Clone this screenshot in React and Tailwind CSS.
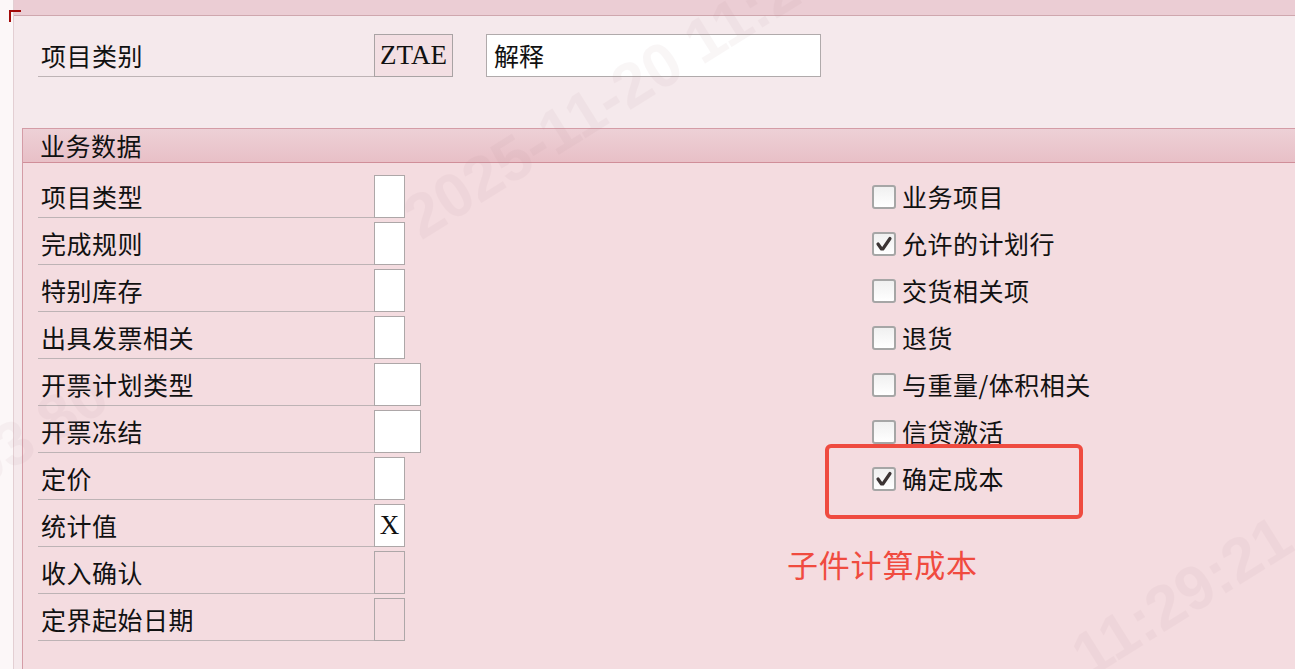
import React from "react";

const cjk = { fontFamily: '"Noto Sans CJK SC", "Noto Sans", sans-serif' };
const serif = { fontFamily: '"Liberation Serif", "Noto Sans CJK SC", serif' };
const wm = { fontFamily: '"Liberation Sans", sans-serif' };

const leftRows = [
  { label: "项目类型", w: "w-[31px]" },
  { label: "完成规则", w: "w-[31px]" },
  { label: "特别库存", w: "w-[31px]" },
  { label: "出具发票相关", w: "w-[31px]" },
  { label: "开票计划类型", w: "w-[47px]" },
  { label: "开票冻结", w: "w-[47px]" },
  { label: "定价", w: "w-[31px]" },
  { label: "统计值", w: "w-[31px]", value: "X" },
  { label: "收入确认", w: "w-[31px]", disabled: true },
  { label: "定界起始日期", w: "w-[31px]", disabled: true },
];

const rightRows = [
  { label: "业务项目", checked: false },
  { label: "允许的计划行", checked: true },
  { label: "交货相关项", checked: false },
  { label: "退货", checked: false },
  { label: "与重量/体积相关", checked: false },
  { label: "信贷激活", checked: false },
  { label: "确定成本", checked: true },
];

function CheckBox({ checked }) {
  return (
    <div className="w-[24px] h-[24px] shrink-0 rounded-[3px] border-2 border-[#a6a6a6] bg-gradient-to-b from-[#f0f0f0] to-white flex items-center justify-center">
      {checked && (
        <svg width="18" height="18" viewBox="0 0 18 18">
          <path d="M3 9 L6.5 14 L7.8 14 L15 3.5" fill="none" stroke="#3c3434" strokeWidth="3.2" strokeLinecap="round" strokeLinejoin="round" />
        </svg>
      )}
    </div>
  );
}

export default function App() {
  return (
    <div className="relative w-[1295px] h-[669px] overflow-hidden flex bg-[#f5e9ec] text-[#111]" style={cjk}>
      {/* left strip */}
      <div className="w-[14px] shrink-0 bg-[#fcf7f8] border-r border-[#e3cfd3] relative">
        <div className="absolute left-[9px] top-[10px] w-[12px] h-[2px] bg-[#a30a0a]" />
        <div className="absolute left-[9px] top-[10px] w-[2px] h-[12px] bg-[#a30a0a]" />
      </div>

      {/* main */}
      <div className="flex-1 flex flex-col min-w-0">
        <div className="h-[16px] shrink-0 bg-[#ebcdd4] border-b border-[#cfa7ae]" />

        {/* header field row */}
        <div className="flex items-end mt-[18px] pl-[24px]">
          <div className="w-[336px] h-[43px] border-b border-[#bdb3b5] flex items-center pl-[3px] text-[25px] tracking-[0.5px] leading-none">
            项目类别
          </div>
          <div className="w-[79px] h-[43px] border border-[#a9a3a4] bg-[#f3dfe3] flex items-center justify-center text-[27px] leading-none" style={serif}>
            ZTAE
          </div>
          <div className="ml-[33px] w-[335px] h-[43px] border border-[#b0aaab] bg-white flex items-center pl-[7px] text-[25px] leading-none">
            解释
          </div>
        </div>

        {/* section panel */}
        <div className="mt-[51px] ml-[8px] flex-1 flex flex-col border-l border-t border-[#d49ca6] bg-[#f4dce0]">
          <div className="h-[34px] shrink-0 bg-gradient-to-b from-[#edd0d6] to-[#e8c0c7] border-b border-[#d08e99] flex items-center pl-[17px] text-[25px] tracking-[0.5px] leading-none">
            业务数据
          </div>

          <div className="flex pt-[12px] pl-[15px]">
            {/* left column */}
            <div className="w-[834px] shrink-0 flex flex-col gap-[4px]">
              {leftRows.map((r) => (
                <div key={r.label} className="flex items-stretch h-[43px]">
                  <div className="w-[336px] border-b border-[#bdb3b5] flex items-center pl-[3px] text-[25px] tracking-[0.5px] leading-none">
                    {r.label}
                  </div>
                  <div
                    className={`${r.w} border border-[#ada7a8] ${r.disabled ? "bg-[#f4dce0]" : "bg-white"} flex items-center justify-center text-[27px] leading-none`}
                    style={serif}
                  >
                    {r.value || ""}
                  </div>
                </div>
              ))}
            </div>

            {/* right column */}
            <div className="flex flex-col gap-[4px]">
              {rightRows.map((r) => (
                <div key={r.label} className="h-[43px] flex items-center gap-[6px]">
                  <CheckBox checked={r.checked} />
                  <span className="text-[25px] tracking-[0.5px] leading-none whitespace-nowrap">{r.label}</span>
                </div>
              ))}
            </div>
          </div>
        </div>
      </div>

      {/* annotation overlays */}
      <div className="absolute left-[825px] top-[444px] w-[258px] h-[75px] border-[4px] border-[#ef4b40] rounded-[6px] pointer-events-none" />
      <div className="absolute left-[787px] top-[548px] text-[31px] leading-none tracking-[0.8px] text-[#f04b3f] whitespace-nowrap">
        子件计算成本
      </div>

      {/* faint watermarks */}
      <div className="absolute left-[410px] top-[192px] text-[62px] leading-none font-bold text-[#b08890] opacity-[0.07] whitespace-nowrap -rotate-[32deg] origin-left pointer-events-none" style={wm}>
        2025-11-20 11:29:21
      </div>
      <div className="absolute left-[1078px] top-[630px] text-[62px] leading-none font-bold text-[#b08890] opacity-[0.07] whitespace-nowrap -rotate-[32deg] origin-left pointer-events-none" style={wm}>
        11:29:21
      </div>
      <div className="absolute left-[-30px] top-[440px] text-[62px] leading-none font-bold text-[#b08890] opacity-[0.07] whitespace-nowrap -rotate-[32deg] origin-left pointer-events-none" style={wm}>
        03 80
      </div>
    </div>
  );
}
